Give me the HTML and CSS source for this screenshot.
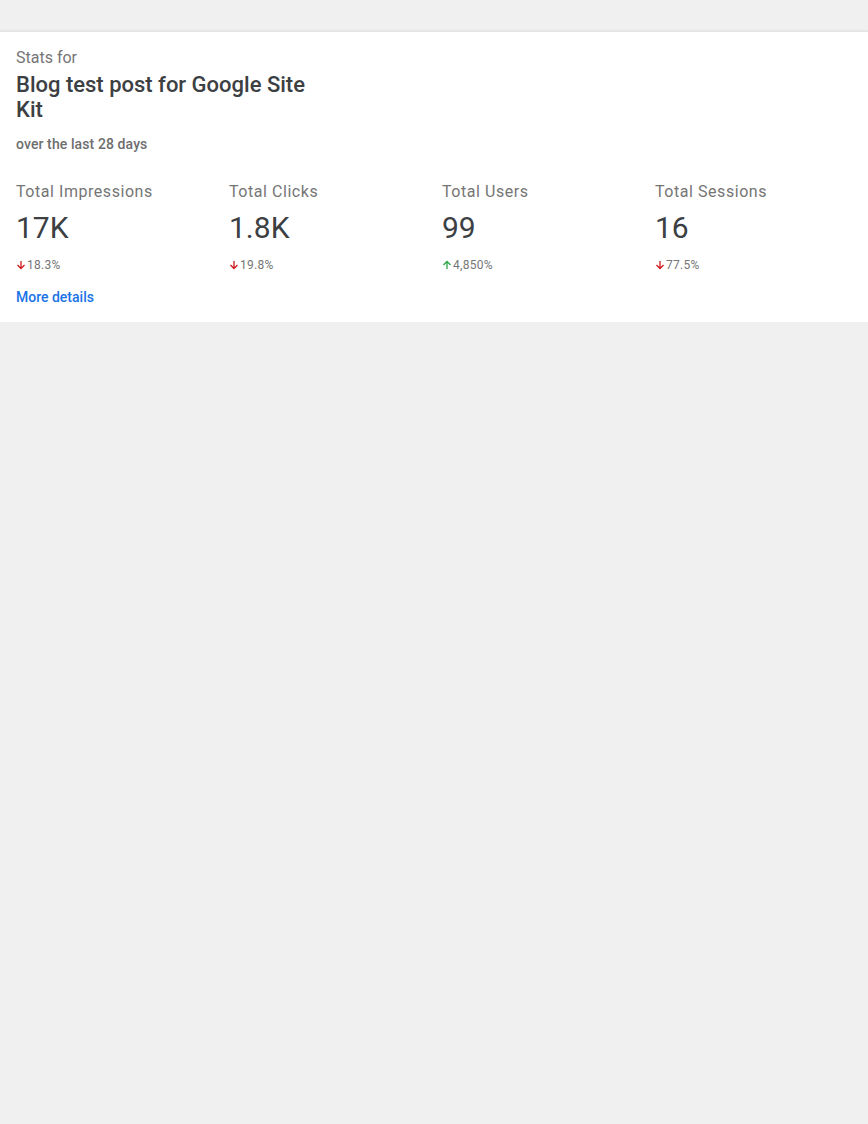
FILE: index.html
```html
<!DOCTYPE html>
<html>
<head>
<meta charset="utf-8">
<link rel="stylesheet" href="styles.css">
</head>
<body>
<div class="topbar"></div>
<section class="card">
  <header class="head">
    <div class="eyebrow">Stats for</div>
    <h1 class="title">Blog test post for Google Site Kit</h1>
    <div class="range">over the last 28 days</div>
  </header>
  <div class="stats">
    <div class="stat">
      <div class="label">Total Impressions</div>
      <div class="value">17K</div>
      <div class="change"><svg class="arrow down" viewBox="0 0 10 10"><path d="M5 1v7.5M1.5 5L5 8.5 8.5 5"/></svg>18.3%</div>
    </div>
    <div class="stat">
      <div class="label">Total Clicks</div>
      <div class="value">1.8K</div>
      <div class="change"><svg class="arrow down" viewBox="0 0 10 10"><path d="M5 1v7.5M1.5 5L5 8.5 8.5 5"/></svg>19.8%</div>
    </div>
    <div class="stat">
      <div class="label">Total Users</div>
      <div class="value">99</div>
      <div class="change"><svg class="arrow up" viewBox="0 0 10 10"><path d="M5 9V1.5M1.5 5L5 1.5 8.5 5"/></svg>4,850%</div>
    </div>
    <div class="stat">
      <div class="label">Total Sessions</div>
      <div class="value">16</div>
      <div class="change"><svg class="arrow down" viewBox="0 0 10 10"><path d="M5 1v7.5M1.5 5L5 8.5 8.5 5"/></svg>77.5%</div>
    </div>
  </div>
  <a class="more" href="#">More details</a>
</section>
</body>
</html>
```
FILE: styles.css
```css
html, body {
  margin: 0;
  padding: 0;
}
body {
  background: #f0f0f0;
  font-family: Roboto, "Noto Sans", Arial, sans-serif;
  color: #3c4043;
}
.topbar {
  height: 31px;
}
.card {
  background: #fff;
  border-top: 1px solid #e4e4e4;
  box-shadow: 0 1px 3px rgba(0, 0, 0, 0.22);
  padding: 14px 0 15px 16px;
}
.head {
  max-width: 308px;
}
.eyebrow {
  font-size: 16px;
  line-height: 24px;
  color: #757575;
}
.title {
  margin: 1.5px 0 0;
  font-size: 22px;
  line-height: 25px;
  font-weight: 500;
  color: #3c4043;
}
.range {
  margin-top: 12.5px;
  font-size: 14px;
  line-height: 20px;
  font-weight: 500;
  letter-spacing: 0.1px;
  color: #6e6e6e;
}
.stats {
  margin-top: 26px;
  display: grid;
  grid-template-columns: repeat(4, 1fr);
}
.label {
  font-size: 16px;
  line-height: 24px;
  letter-spacing: 0.55px;
  color: #757575;
}
.value {
  margin-top: 6px;
  font-size: 30px;
  line-height: 36px;
  color: #3c4043;
}
.change {
  margin-top: 11px;
  display: flex;
  align-items: center;
  font-size: 12px;
  line-height: 16px;
  letter-spacing: 0.3px;
  color: #757575;
}
.arrow {
  width: 10px;
  height: 10px;
  margin-right: 1px;
  fill: none;
  stroke-width: 1.3;
}
.arrow.down {
  stroke: #d0191c;
}
.arrow.up {
  stroke: #2ba84a;
}
.more {
  display: inline-block;
  margin-top: 14px;
  font-size: 14px;
  line-height: 20px;
  font-weight: 500;
  color: #1a73e8;
  text-decoration: none;
}
```
